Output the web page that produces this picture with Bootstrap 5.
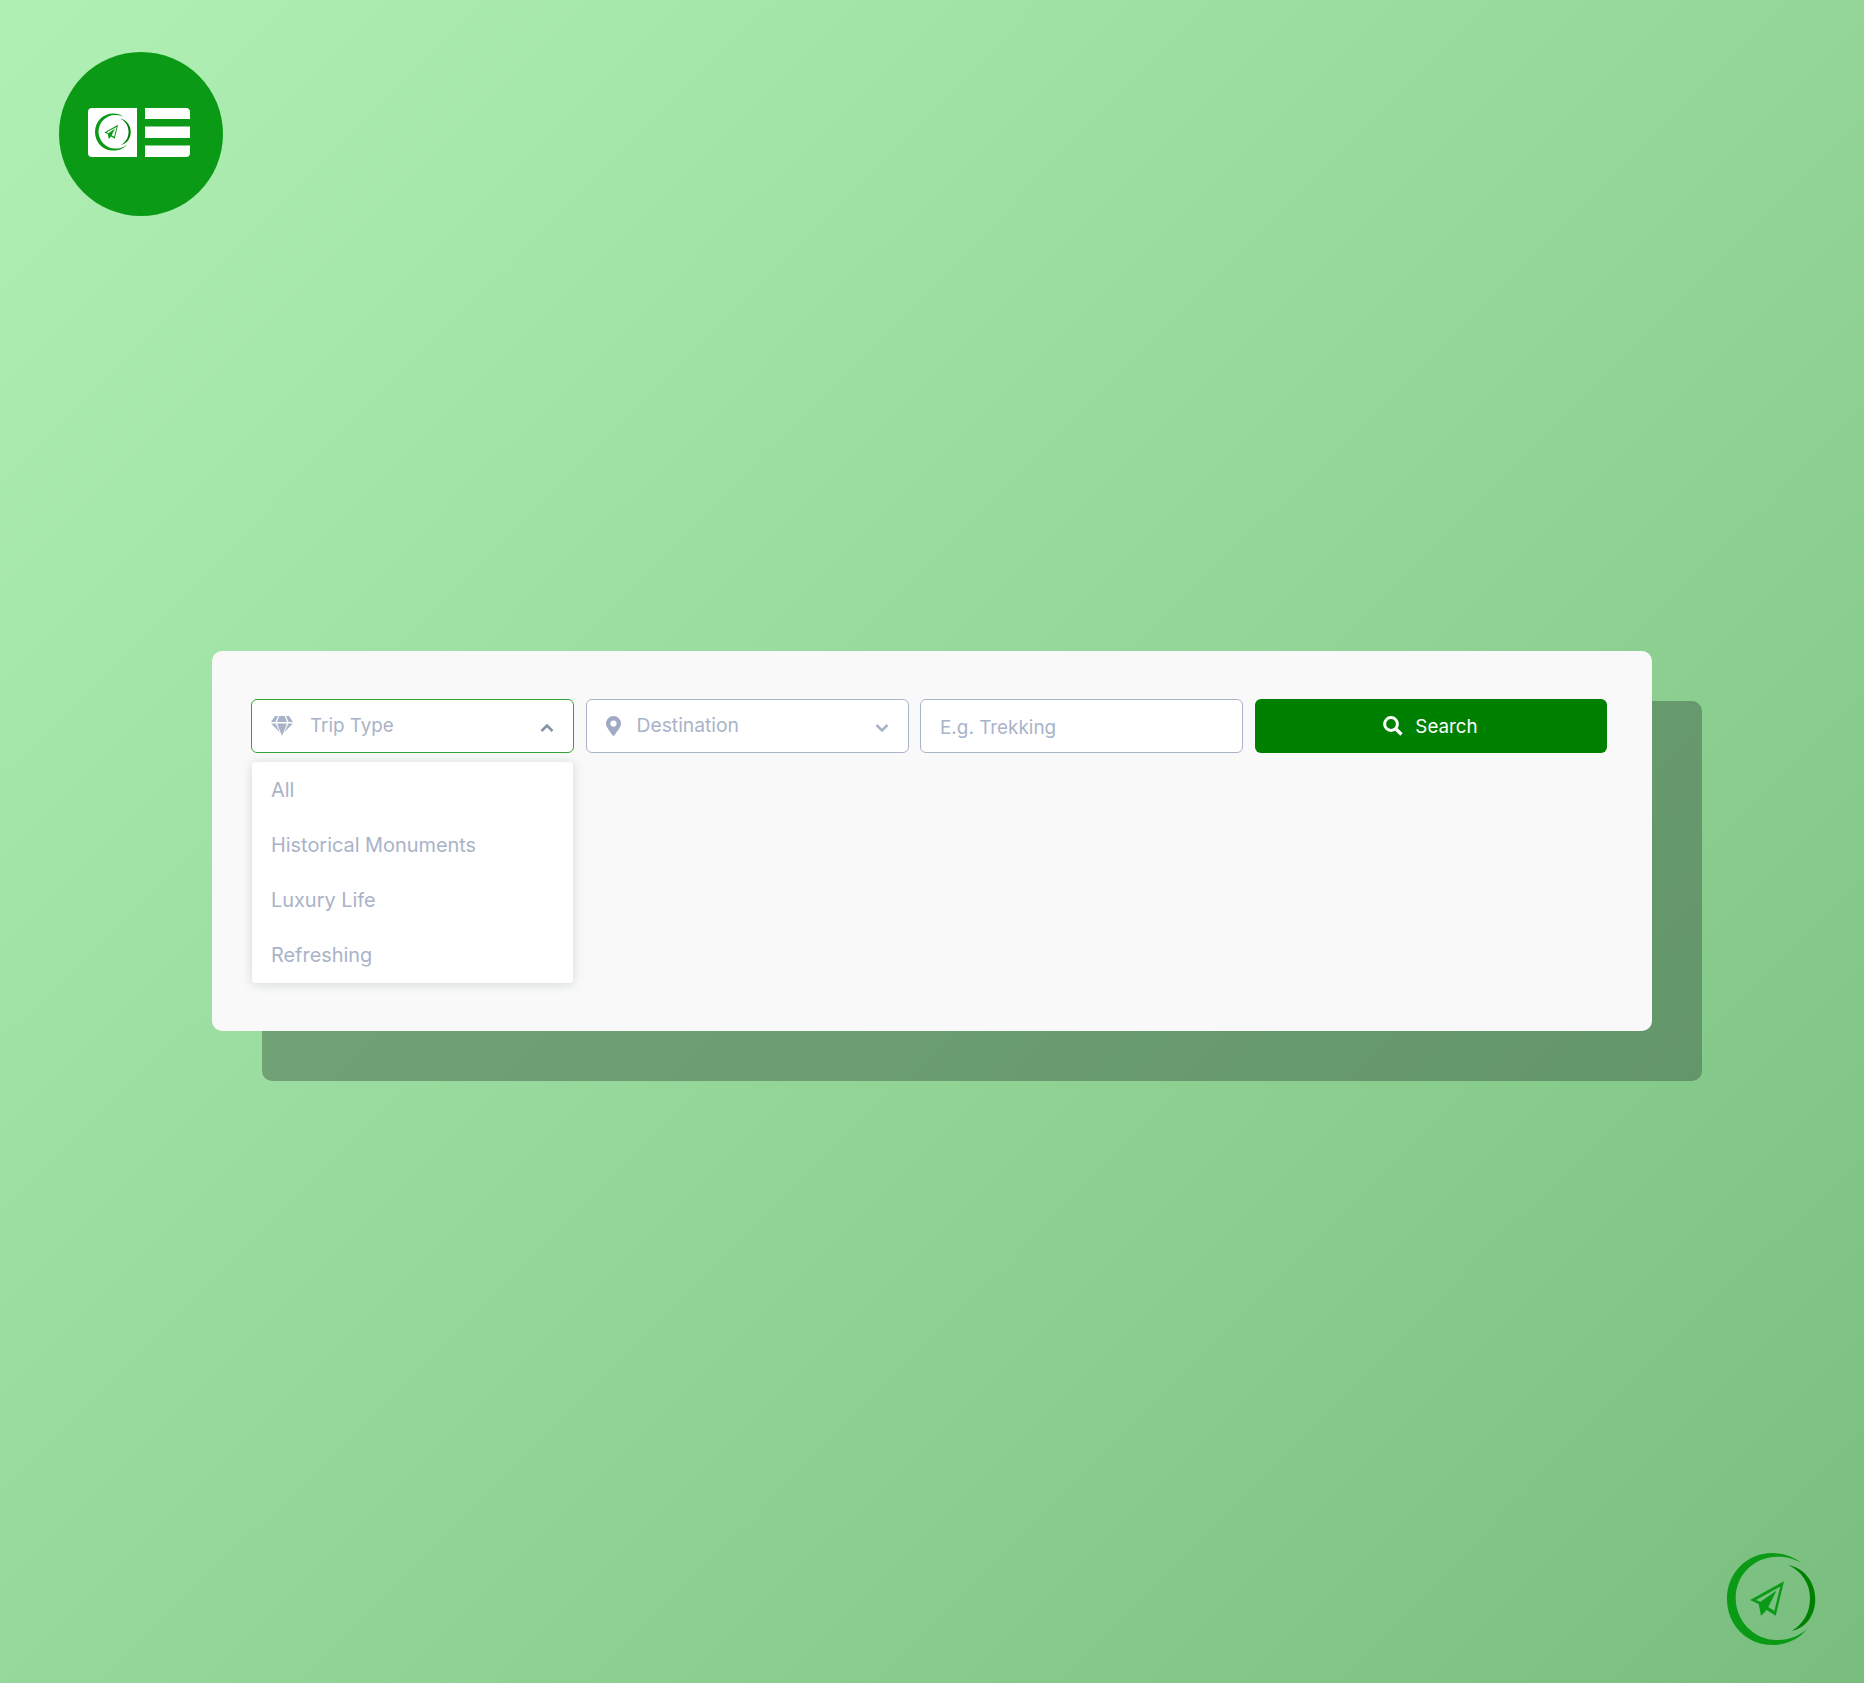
<!DOCTYPE html>
<html lang="en">
<head>
<meta charset="utf-8">
<meta name="viewport" content="width=device-width, initial-scale=1">
<title>Trip search</title>
<link href="https://cdn.jsdelivr.net/npm/bootstrap@5.3.0/dist/css/bootstrap.min.css" rel="stylesheet">
<style>
  body { font-family: Inter, "Liberation Sans", sans-serif; background: #fff; }
  .stage { height: 1683px; background: linear-gradient(135deg, #b0f0b4 0%, #79be7f 100%); padding: 52px 48px 38px 59px; }
  .logo-disc { width: 164px; height: 164px; background: #0a9a16; }
  .search-panel { width: 1440px; height: 379.5px; margin: 435px 0 0 153px; padding: 47.5px 45px 0 39px; background: #f9f9f9; border-radius: 10px; box-shadow: 50px 50px 0 rgba(52, 78, 58, .41); }
  .fields { display: grid; grid-template-columns: 323px 323px 323px 352px; column-gap: 11.5px; }
  .field-box { height: 54px; background: #fff; border: 1.5px solid #a9b3c8; border-radius: 6px; padding: 0 19px; color: #a9b3c8; font-size: 19.3px; line-height: 1; }
  .field-box.is-open { border-color: #30a43a; font-size: 18.8px; }
  .field-box span { padding-top: 1px; }
  .search-btn span { padding-top: 3px; }
  .search-btn svg { margin-top: 1px; }
  .trip-gap { margin-left: 17px; }
  input.field-box { padding-top: 3px; font-size: 18.9px; }
  input.field-box::placeholder { color: #a9b3c8; opacity: 1; }
  .search-btn { height: 54px; background: #008000; color: #fff; border: 0; border-radius: 6px; font-size: 18.8px; }
  .search-btn:hover { background: #008000; color: #fff; }
  .trip-menu { width: 321px; height: 221px; margin: 9px 0 0 1px; border-radius: 4px; background: #fff; box-shadow: 0 1px 11px rgba(60, 110, 90, .22); color: #a9b3c8; font-size: 19.9px; }
  .trip-menu li { height: 55.1px; padding-left: 19px; line-height: 57px; }
  .brand-mark { width: 89px; height: 92px; }
</style>
</head>
<body>
<svg width="0" height="0" class="position-absolute" aria-hidden="true">
  <symbol id="brand" viewBox="0 0 89 92">
    <path fill="#0a9a16" d="M75 10.500C66 3.500 56 0 45 0C20 0 0 20 0 46C0 72 20 92 45 92C60 92 72 86 80 76C72 83 62 87 50 87C27 87 8.700 68 8.700 45C8.700 22 27 4 50 3.700C60 3.500 68 6 75 10.500Z"/>
    <path fill="#008000" d="M61.300 12C77 15 88.300 29 88.300 46C88.300 62 79 75 64.700 78C76 71 83 60 83 45C83 30 74 18 61.300 12Z"/>
    <path fill="#0a9a16" fill-rule="evenodd" d="M57 28.300L23 47L31.700 51L34 63L39.700 57L48.700 62.700ZM53.300 33.500L47.300 58L41.300 54L49.500 37.500L33.500 48.800L29 46.900Z"/>
  </symbol>
</svg>
<main class="stage d-flex flex-column">
  <header class="logo-disc rounded-circle d-flex flex-shrink-0">
    <svg width="164" height="164" viewBox="0 0 164 164">
      <path fill="#fff" d="M33 56H78V105H33a4 4 0 0 1-4-4V60a4 4 0 0 1 4-4ZM86 56H127a4 4 0 0 1 4 4V67H86ZM86 74.500H131V86H86ZM86 93.500H131V101a4 4 0 0 1-4 4H86Z"/>
      <use href="#brand" x="36" y="61" width="36" height="38"/>
    </svg>
  </header>
  <section class="search-panel flex-shrink-0">
    <form class="fields">
      <div class="field-box is-open d-flex align-items-center">
        <svg width="22" height="20" viewBox="0 0 22 20" fill="#a9b3c8"><path d="M4 0H7L4.500 6H0ZM8.200 0H13.800L16 6H6ZM15 0H18L22 6H17.500ZM0 7.500H4.500L9 16.500ZM6 7.500H16L11 20ZM17.500 7.500H22L13 16.500Z"/></svg>
        <span class="trip-gap">Trip Type</span>
        <svg class="ms-auto mt-1" width="14" height="10" viewBox="0 0 14 10"><path d="M1.500 8L7 2.500L12.500 8" fill="none" stroke="#8790a6" stroke-width="2.500"/></svg>
      </div>
      <div class="field-box d-flex align-items-center">
        <svg width="15" height="20" viewBox="0 0 384 512" fill="#a0aac2"><path d="M172 502C27 291 0 270 0 192a192 192 0 0 1 384 0c0 78-27 99-172 310-10 13-30 13-40 0zM192 272a80 80 0 1 0 0-160 80 80 0 0 0 0 160z"/></svg>
        <span class="ms-3">Destination</span>
        <svg class="ms-auto mt-1" width="14" height="10" viewBox="0 0 14 10"><path d="M1.500 2L7 7.500L12.500 2" fill="none" stroke="#a9b3c8" stroke-width="2.500"/></svg>
      </div>
      <input class="field-box" type="text" placeholder="E.g. Trekking" aria-label="Keyword">
      <button type="button" class="search-btn btn d-flex align-items-center justify-content-center">
        <svg width="20" height="20" viewBox="0 0 20 20"><circle cx="8" cy="8" r="6.400" fill="none" stroke="#fff" stroke-width="3"/><path d="M12.500 12.500L18.500 18.500" stroke="#fff" stroke-width="3.400"/></svg>
        <span class="ms-2 ps-1">Search</span>
      </button>
    </form>
    <ul class="trip-menu list-unstyled">
      <li>All</li>
      <li>Historical Monuments</li>
      <li>Luxury Life</li>
      <li>Refreshing</li>
    </ul>
  </section>
  <svg class="brand-mark mt-auto ms-auto"><use href="#brand"/></svg>
</main>
<script src="https://cdn.jsdelivr.net/npm/bootstrap@5.3.0/dist/js/bootstrap.bundle.min.js"></script>
</body>
</html>
